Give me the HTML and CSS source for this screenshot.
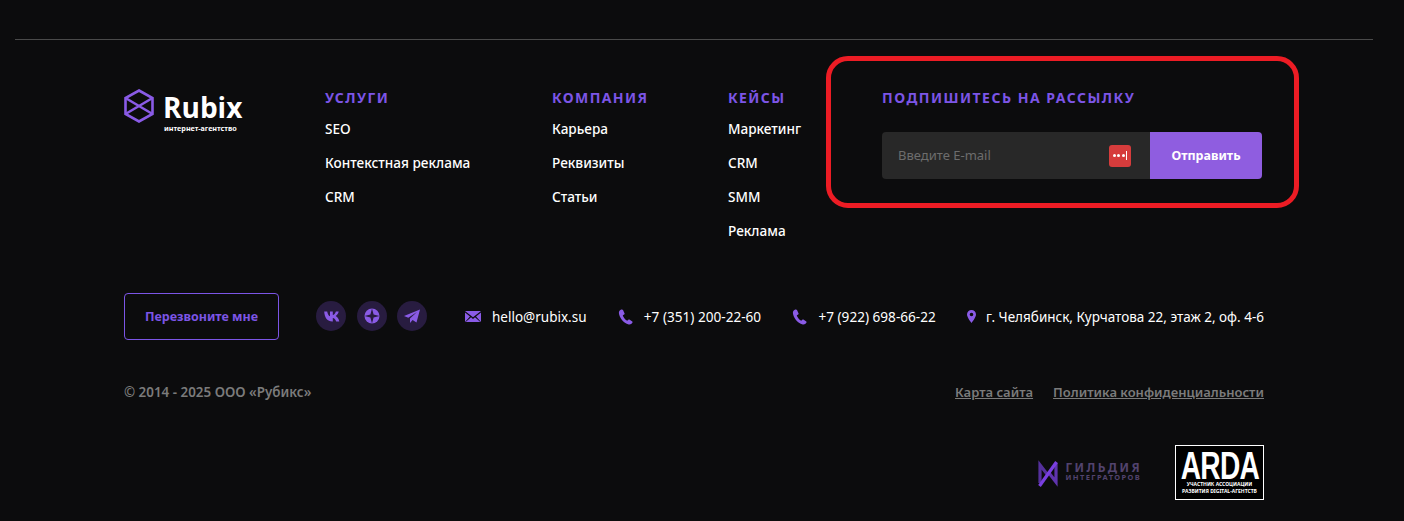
FILE: index.html
```html
<!DOCTYPE html>
<html lang="ru">
  <head>
    <meta charset="UTF-8" />
    <meta name="viewport" content="width=device-width, initial-scale=1.0" />
    <title>Rubix</title>
    <link rel="stylesheet" href="styles.css">
  </head>
  <body>
    <footer class="footer">
      <div class="footer-inner">
        <div class="top-row">
          <a class="logo" href="#">
            <svg class="logo-mark" width="30" height="34" viewBox="0 0 30 34" fill="none" stroke="#8a5be6" stroke-width="2.600">
              <path d="M15 1.500 28.500 9v16L15 32.500 1.500 25V9z"/>
              <path d="M1.500 9 28.500 25M28.500 9 1.500 25"/>
            </svg>
            <div class="logo-text">
              <div class="logo-name">Rubix</div>
              <div class="logo-sub">интернет-агентство</div>
            </div>
          </a>
          <nav class="col col-services">
            <h4>Услуги</h4>
            <a href="#">SEO</a>
            <a href="#">Контекстная реклама</a>
            <a href="#">CRM</a>
          </nav>
          <nav class="col col-company">
            <h4>Компания</h4>
            <a href="#">Карьера</a>
            <a href="#">Реквизиты</a>
            <a href="#">Статьи</a>
          </nav>
          <nav class="col col-cases">
            <h4>Кейсы</h4>
            <a href="#">Маркетинг</a>
            <a href="#">CRM</a>
            <a href="#">SMM</a>
            <a href="#">Реклама</a>
          </nav>
          <div class="subscribe">
            <h4>Подпишитесь на рассылку</h4>
            <form class="subscribe-form">
              <div class="email-field">
                <input type="text" placeholder="Введите E-mail">
                <span class="pass-badge">
                  <i></i><i></i><i></i><b></b>
                </span>
              </div>
              <button type="button">Отправить</button>
            </form>
            <div class="highlight"></div>
          </div>
        </div>

        <div class="contacts-row">
          <a class="call-btn" href="#">Перезвоните мне</a>
          <div class="socials">
            <a href="#">
              <svg width="17" height="11" viewBox="0 0 17 11" fill="#8a5be6"><path d="M0 0h3c.3 2.200 1.400 4.300 2.800 4.800V0h2.800v3.600C9.900 3.400 11.100 1.900 11.700 0h2.800c-.4 2.100-1.900 3.700-3 4.500 1.200.7 2.900 2.200 3.600 5.500h-3.100c-.6-2-2-3.300-3.400-3.500V10h-.5C3.300 10 .4 6.600 0 0z" transform="translate(1.200 .5)"/></svg>
            </a>
            <a href="#">
              <svg width="16" height="16" viewBox="0 0 16 16"><circle cx="8" cy="8" r="7.500" fill="#8a5be6"/><path d="M8 .5 9.600 6.400 15.500 8 9.600 9.600 8 15.500 6.400 9.600 .5 8 6.400 6.400z" fill="#281c40"/></svg>
            </a>
            <a href="#">
              <svg width="16" height="15" viewBox="0 0 16 15" fill="#8a5be6"><path d="M16 .5 0 7l4.300 1.700L13 3 6 9.500V14l2.600-3 3.900 2.600z"/></svg>
            </a>
          </div>
          <ul class="contacts">
            <li class="contact-mail">
              <svg width="16" height="11" viewBox="0 0 16 11" fill="#8a5be6"><path d="M0 0h16L8 6.200zM0 1.600V11l5-5.500zM16 1.600V11l-5-5.500zM6 6.300l2 1.600 2-1.600 5.300 4.700H.7z"/></svg>
              <span>hello@rubix.su</span>
            </li>
            <li class="contact-phone">
              <svg width="15" height="16" viewBox="0 0 15 16" fill="#8a5be6"><path d="M3.300.5C2 .9.700 2.100.9 4c.4 4.500 4.500 10.200 9.800 11.500 1.600.4 3-.5 3.800-1.900.2-.4.100-.8-.2-1l-2.900-2c-.4-.2-.8-.2-1.100.1l-1.100 1.100C7 10.900 5.200 8 4.800 6.300l1.400-.8c.4-.2.500-.6.400-1L5 .9C4.800.5 4 .3 3.300.5z"/></svg>
              <span>+7 (351) 200-22-60</span>
            </li>
            <li class="contact-phone">
              <svg width="15" height="16" viewBox="0 0 15 16" fill="#8a5be6"><path d="M3.300.5C2 .9.700 2.100.9 4c.4 4.500 4.500 10.200 9.800 11.500 1.600.4 3-.5 3.800-1.900.2-.4.100-.8-.2-1l-2.900-2c-.4-.2-.8-.2-1.100.1l-1.100 1.100C7 10.900 5.200 8 4.800 6.300l1.400-.8c.4-.2.500-.6.400-1L5 .9C4.800.5 4 .3 3.300.5z"/></svg>
              <span>+7 (922) 698-66-22</span>
            </li>
            <li class="contact-address">
              <svg width="9" height="13" viewBox="0 0 9 13" fill="#8a5be6"><path fill-rule="evenodd" d="M4.500 0A4.500 4.500 0 0 0 0 4.500C0 7.500 4.500 13 4.500 13S9 7.500 9 4.500A4.500 4.500 0 0 0 4.500 0zm0 6.300a1.800 1.800 0 1 1 0-3.600 1.800 1.800 0 0 1 0 3.600z"/></svg>
              <span>г. Челябинск, Курчатова 22, этаж 2, оф. 4-6</span>
            </li>
          </ul>
        </div>

        <div class="legal-row">
          <div class="copyright">© 2014 - 2025 ООО «Рубикс»</div>
          <div class="legal-links">
            <a href="#">Карта сайта</a>
            <a href="#">Политика конфиденциальности</a>
          </div>
        </div>

        <div class="badges-row">
          <div class="guild">
            <svg width="22" height="28" viewBox="0 0 22 28" fill="none" stroke-width="3.200">
              <path d="M3 23V5l7 9" stroke="#55309c"/>
              <path d="M19 3v19l-7-9" stroke="#5f34ad"/>
              <path d="M2.500 26 19.500 2" stroke="#7a3fe0"/>
            </svg>
            <div class="guild-text">
              <div class="guild-top">Гильдия</div>
              <div class="guild-bottom">Интеграторов</div>
            </div>
          </div>
          <div class="arda">
            <div class="arda-name">ARDA</div>
            <div class="arda-sub">Участник ассоциации<br>развития digital-агентств</div>
          </div>
        </div>
      </div>
    </footer>
  </body>
</html>
```

FILE: styles.css
```css
* {
  box-sizing: border-box;
}
body {
  margin: 0;
  background-color: #0c0c0d;
  color: #ffffff;
  font-family: "Noto Sans", sans-serif;
}
a {
  color: inherit;
  text-decoration: none;
}
.footer {
  margin: 39px 31px 0 15px;
  border-top: 1px solid #4a4a4a;
  height: 482px;
}
.footer-inner {
  width: 1140px;
  margin: 0 auto;
}

/* top row */
.top-row {
  display: flex;
  align-items: flex-start;
  padding-top: 49px;
  height: 253px;
}
.logo {
  width: 201px;
  display: flex;
  gap: 9px;
  align-items: flex-start;
}
.logo-name {
  font-family: "Open Sans", sans-serif;
  font-size: 28px;
  font-weight: 700;
  line-height: 32px;
  margin-top: 2px;
}
.logo-sub {
  font-size: 7.200px;
  font-weight: 700;
  line-height: 8px;
  white-space: nowrap;
  margin-top: 1px;
  margin-left: 1px;
}
.col h4,
.subscribe h4 {
  margin: 0;
  color: #7c55e6;
  font-size: 14px;
  font-weight: 700;
  line-height: 18px;
  letter-spacing: 1.400px;
  text-transform: uppercase;
}
.col a {
  display: block;
  font-size: 13.600px;
  font-weight: 500;
  line-height: 34px;
}
.col h4 {
  margin-bottom: 5px;
}
.col-services {
  width: 227px;
}
.col-company {
  width: 176px;
}
.col-cases {
  width: 154px;
}
.subscribe {
  position: relative;
  width: 380px;
}
.subscribe h4 {
  margin-bottom: 25px;
  letter-spacing: 1.500px;
}
.subscribe-form {
  display: flex;
  height: 47px;
}
.email-field {
  width: 268px;
  display: flex;
  align-items: center;
  padding: 0 19px 0 16px;
  background-color: #282828;
  border-radius: 4px 0 0 4px;
}
.email-field input {
  flex: 1;
  min-width: 0;
  border: none;
  outline: none;
  background: none;
  padding: 0 0 2px;
  color: #fff;
  font-family: inherit;
  font-size: 13px;
}
.email-field input::placeholder {
  color: #6d6d6d;
}
.pass-badge {
  width: 22px;
  height: 22px;
  display: flex;
  align-items: center;
  justify-content: center;
  gap: 1.500px;
  background-color: #d63c3c;
  border-radius: 3px;
}
.pass-badge i {
  width: 3px;
  height: 3px;
  background-color: #fff;
  border-radius: 50%;
}
.pass-badge b {
  width: 1px;
  height: 9px;
  background-color: #fff;
}
.subscribe-form button {
  width: 112px;
  border: none;
  padding: 0;
  background-color: #8f5de0;
  color: #fff;
  font-family: inherit;
  font-size: 12.500px;
  font-weight: 700;
  border-radius: 0 4px 4px 0;
}
.highlight {
  position: absolute;
  left: -56px;
  top: -33px;
  width: 473px;
  height: 152px;
  border: 5px solid #ed1c24;
  border-radius: 22px;
}

/* contacts */
.contacts-row {
  display: flex;
  align-items: center;
  height: 47px;
}
.call-btn {
  width: 155px;
  height: 47px;
  display: flex;
  align-items: center;
  justify-content: center;
  border: 1px solid #7c55e6;
  border-radius: 4px;
  color: #7c55e6;
  font-size: 12.500px;
  font-weight: 700;
}
.socials {
  display: flex;
  gap: 10.500px;
  margin-left: 37px;
  margin-top: -1px;
}
.socials a {
  width: 30px;
  height: 30px;
  display: flex;
  align-items: center;
  justify-content: center;
  background-color: #281c40;
  border-radius: 50%;
}
.contacts {
  display: flex;
  align-items: center;
  flex: 1;
  justify-content: space-between;
  list-style: none;
  margin: 0 0 0 38px;
  padding: 0;
  font-size: 13.500px;
}
.contacts li {
  display: flex;
  align-items: center;
  gap: 10px;
  white-space: nowrap;
}
.contacts .contact-mail {
  gap: 11px;
}
.contacts .contact-phone {
  gap: 11px;
  font-size: 13.600px;
}

/* legal */
.legal-row {
  display: flex;
  justify-content: space-between;
  margin-top: 43px;
  color: #7b7b7b;
  font-size: 13px;
  font-weight: 600;
  line-height: 18px;
}
.copyright {
  font-size: 13.400px;
}
.legal-links {
  display: flex;
  gap: 20px;
}
.legal-links a {
  text-decoration: underline;
}

/* badges */
.badges-row {
  display: flex;
  justify-content: flex-end;
  align-items: center;
  gap: 33px;
  margin-top: 44px;
}
.guild {
  display: flex;
  align-items: center;
  gap: 6px;
  margin-top: 3px;
}
.guild-text {
  color: #52436e;
  text-transform: uppercase;
  font-weight: 700;
  margin-bottom: 5px;
}
.guild-top {
  font-size: 12px;
  line-height: 11px;
  letter-spacing: 2.400px;
}
.guild-bottom {
  font-size: 7.500px;
  line-height: 9px;
  letter-spacing: 1.400px;
}
.arda {
  width: 89px;
  height: 55px;
  display: flex;
  flex-direction: column;
  align-items: center;
  background-color: #000;
  border: 1px solid #fff;
  text-align: center;
}
.arda-name {
  font-family: "Liberation Sans", sans-serif;
  font-size: 38px;
  line-height: 30px;
  margin-top: 5px;
  font-weight: 700;
  white-space: nowrap;
  letter-spacing: -1px;
  transform: scaleX(0.74);
}
.arda-sub {
  font-size: 5px;
  font-weight: 700;
  line-height: 7px;
  text-transform: uppercase;
  white-space: nowrap;
}
```
